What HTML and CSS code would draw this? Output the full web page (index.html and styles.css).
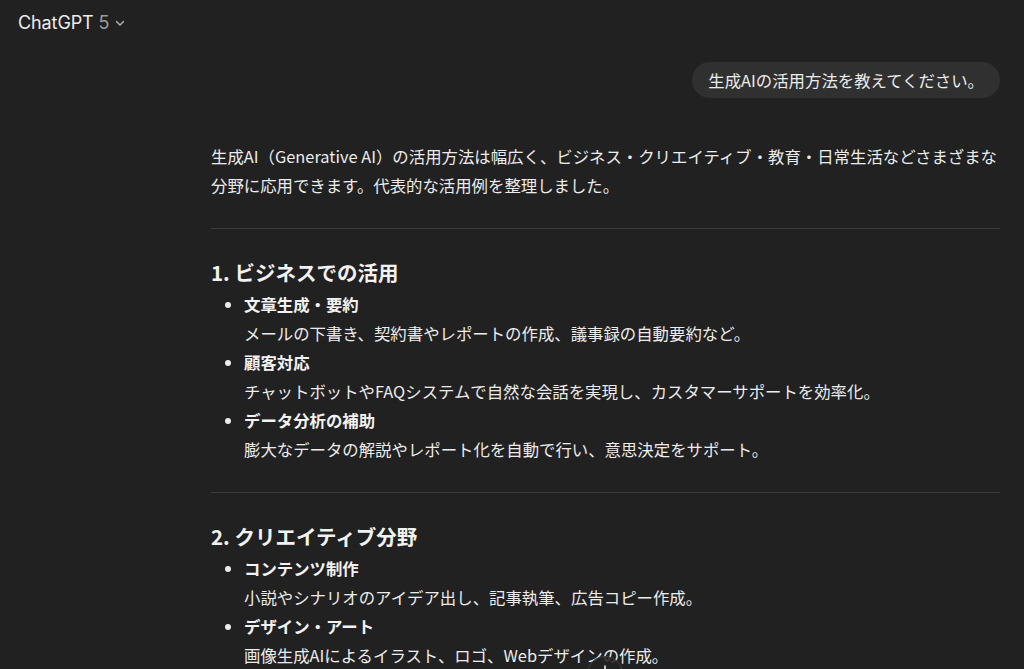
FILE: index.html
```html
<!DOCTYPE html>
<html lang="ja">
<head>
<meta charset="utf-8">
<link rel="stylesheet" href="styles.css">
</head>
<body>
<header class="topbar">
  <span class="model">ChatGPT <span class="ver">5</span></span>
  <svg class="chev" width="12" height="12" viewBox="0 0 12 12"><path d="M2.5 4.5 L6 8 L9.5 4.5" fill="none" stroke="#b4b4b4" stroke-width="1.4" stroke-linecap="round" stroke-linejoin="round"/></svg>
</header>
<main class="thread">
  <div class="user-row">
    <div class="bubble">生成AIの活用方法を教えてください。</div>
  </div>
  <div class="answer">
    <p>生成AI（Generative AI）の活用方法は幅広く、ビジネス・クリエイティブ・教育・日常生活などさまざまな分野に応用できます。代表的な活用例を整理しました。</p>
    <hr>
    <h3>1. ビジネスでの活用</h3>
    <ul>
      <li><strong>文章生成・要約</strong><br>メールの下書き、契約書やレポートの作成、議事録の自動要約など。</li>
      <li><strong>顧客対応</strong><br>チャットボットやFAQシステムで自然な会話を実現し、カスタマーサポートを効率化。</li>
      <li><strong>データ分析の補助</strong><br>膨大なデータの解説やレポート化を自動で行い、意思決定をサポート。</li>
    </ul>
    <hr>
    <h3>2. クリエイティブ分野</h3>
    <ul>
      <li><strong>コンテンツ制作</strong><br>小説やシナリオのアイデア出し、記事執筆、広告コピー作成。</li>
      <li><strong>デザイン・アート</strong><br>画像生成AIによるイラスト、ロゴ、Webデザインの作成。</li>
    </ul>
  </div>
  <button class="scroll-down" aria-label="scroll down">
    <svg width="20" height="20" viewBox="0 0 20 20"><path d="M10 2 V17 M5 12 L10 17 L15 12" fill="none" stroke="#ececec" stroke-width="1.6" stroke-linecap="round" stroke-linejoin="round"/></svg>
  </button>
</main>
</body>
</html>
```
FILE: styles.css
```css
html, body {
  margin: 0;
  padding: 0;
  background: #212121;
  height: 100%;
  overflow: hidden;
}
body {
  font-family: "Noto Sans CJK JP", "Noto Sans", sans-serif;
  color: #ececec;
  font-size: 16.4px;
}
.topbar {
  height: 44px;
  display: flex;
  align-items: center;
  padding-left: 18px;
  gap: 5px;
}
.model {
  font-family: "Inter", "Noto Sans", sans-serif;
  font-size: 18px;
  color: #ececec;
  letter-spacing: -0.1px;
}
.ver {
  color: #9b9b9b;
}
.chev {
  margin-top: 2px;
}
.thread {
  position: relative;
  width: 789px;
  margin-left: 211px;
  height: 625px;
}
.user-row {
  display: flex;
  justify-content: flex-end;
  padding-top: 18px;
}
.bubble {
  background: #303030;
  border-radius: 18px;
  padding: 6px 16px;
  line-height: 24px;
  color: #ececec;
}
.answer {
  padding-top: 44px;
  line-height: 29px;
}
.answer p {
  margin: 0;
}
.answer hr {
  border: 0;
  border-top: 1px solid #3d3d3d;
  margin: 28px 0 29px;
}
.answer h3 {
  margin: 0 0 4px;
  font-size: 20.5px;
  line-height: 28px;
  font-weight: 700;
  color: #f2f2f2;
}
.answer ul {
  margin: 0;
  padding-left: 33px;
}
.answer li strong {
  font-weight: 700;
  color: #f2f2f2;
}
.scroll-down {
  position: absolute;
  left: 376px;
  top: 612px;
  width: 36px;
  height: 36px;
  border-radius: 50%;
  border: 1px solid #424242;
  background: rgba(33, 33, 33, 0.85);
  display: flex;
  align-items: center;
  justify-content: center;
  padding: 0;
}
```
